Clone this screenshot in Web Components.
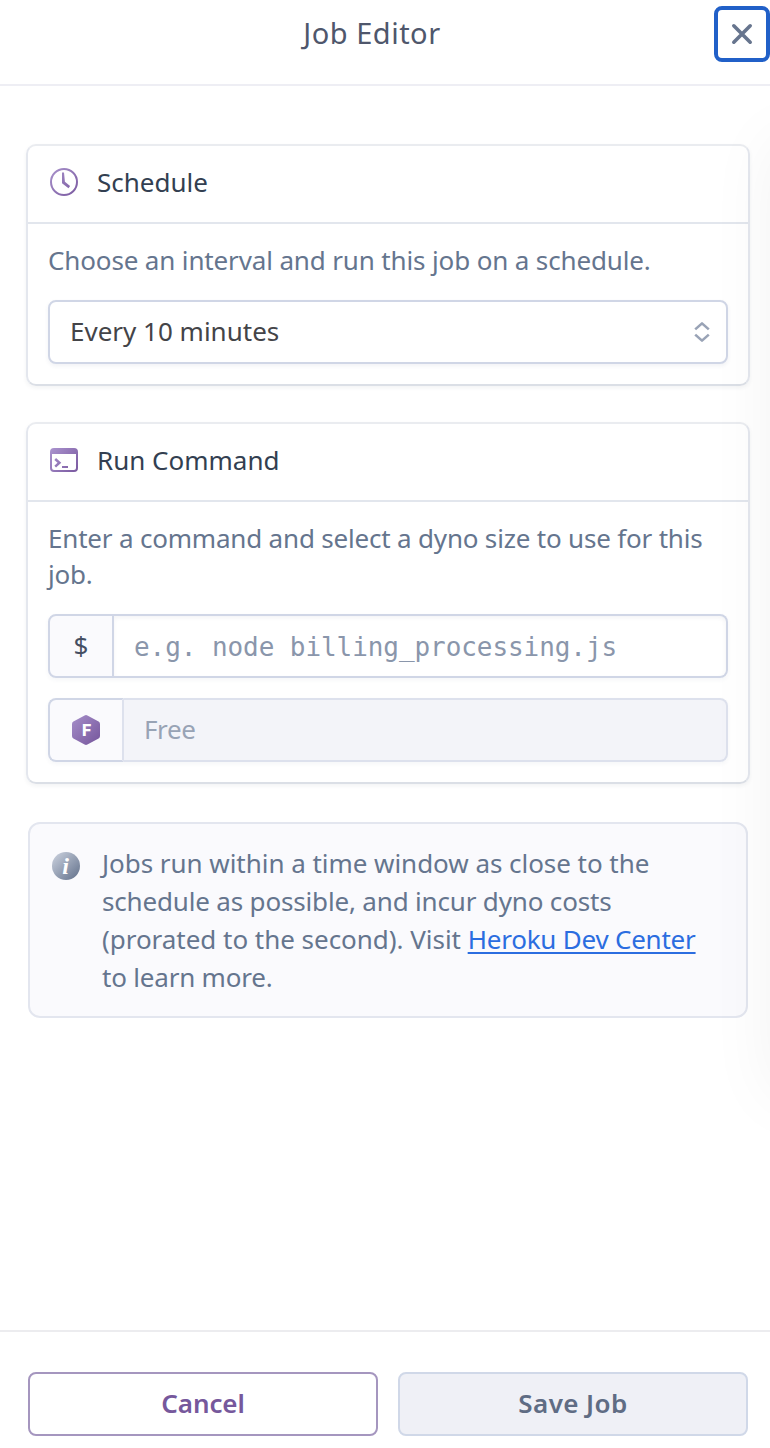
<!DOCTYPE html>
<html lang="en">
<head>
<meta charset="utf-8">
<title>Job Editor</title>
<style>
html, body { margin: 0; height: 100%; }
body { background: #fff; font-family: "Noto Sans", sans-serif; font-size: 26px; color: #65758e; overflow: hidden; }
</style>
</head>
<body>
<job-editor></job-editor>
<script>
function define(name, html) {
  const template = document.createElement('template');
  template.innerHTML = html;
  customElements.define(name, class extends HTMLElement {
    constructor() {
      super();
      this.attachShadow({ mode: 'open' }).append(template.content.cloneNode(true));
    }
  });
}

define('close-button', `
<style>
:host { display: block; }
button { display: grid; place-items: center; box-sizing: border-box; width: 56px; height: 56px; padding: 0; border: 4px solid #2160c8; border-radius: 8px; background: #fff; }
</style>
<button aria-label="Close"><svg width="24" height="24" viewBox="0 0 24 24" fill="none" stroke="#67758e" stroke-width="3.6" stroke-linecap="round"><path d="M3.8 3.8 20.2 20.2M20.2 3.8 3.8 20.2"/></svg></button>`);

define('editor-header', `
<style>
:host { display: flex; box-sizing: border-box; height: 86px; padding: 6px 0 0 30px; border-bottom: 2px solid #eeeef4; background: #fff; }
h1 { flex: 1; margin: 0; font-size: 29px; font-weight: 400; line-height: 54px; text-align: center; color: #4f576c; letter-spacing: .5px; }
</style>
<h1><slot></slot></h1><close-button></close-button>`);

define('panel-card', `
<style>
:host { display: block; box-sizing: border-box; border: 2px solid #e4e7ee; border-top-color: #eaecf0; border-bottom-color: #dbdfe6; border-radius: 10px; box-shadow: 0 2px 4px rgba(40,50,70,.06); }
header { display: flex; align-items: center; gap: 19px; box-sizing: border-box; height: 78px; padding: 0 20px 2px 22px; border-bottom: 2px solid #e2e6ed; }
h2 { margin: 0 0 2px; font-size: 26px; font-weight: 400; line-height: 36px; color: #333f51; }
.body { padding: 18px 20px; }
</style>
<header><slot name="icon"></slot><h2><slot name="title"></slot></h2></header>
<div class="body"><slot></slot></div>`);

define('clock-icon', `
<style>:host { display: block; height: 28px; margin-bottom: 2px; } svg { display: block; }</style>
<svg width="28" height="28" viewBox="0 0 28 28" fill="none" stroke="url(#g)"><defs><linearGradient id="g" gradientUnits="userSpaceOnUse" x1="0" y1="0" x2="28" y2="28"><stop stop-color="#a993cc"/><stop offset="1" stop-color="#79589f"/></linearGradient></defs><circle cx="14" cy="14" r="13" stroke-width="2"/><path d="M12 4.5h2l.9 9.3 5.2 4.2-1.6 2.2-6.5-5z" fill="url(#g)" stroke="none"/></svg>`);

define('terminal-icon', `
<style>:host { display: block; height: 24px; margin-bottom: 2px; } svg { display: block; }</style>
<svg width="28" height="24" viewBox="0 0 28 24"><defs><linearGradient id="g" gradientUnits="userSpaceOnUse" x1="0" y1="0" x2="28" y2="24"><stop stop-color="#ab94cf"/><stop offset="1" stop-color="#79589f"/></linearGradient></defs><path fill="url(#g)" fill-rule="evenodd" d="M4 0h20a4 4 0 0 1 4 4v16a4 4 0 0 1-4 4H4a4 4 0 0 1-4-4V4a4 4 0 0 1 4-4ZM2 6v14q0 2 2 2h20q2 0 2-2V6Z"/><path fill="none" stroke="url(#g)" stroke-width="2.5" d="m5.2 11 4.2 3.8-4.2 3.8"/><path fill="url(#g)" d="M12 18h6v2h-6z"/></svg>`);

define('select-box', `
<style>
:host { display: flex; align-items: center; justify-content: space-between; box-sizing: border-box; height: 64px; padding: 0 16px 2px 20px; border: 2px solid #d0d6e6; border-radius: 8px; background: #fff; color: #444448; box-shadow: 0 2px 4px rgba(60,70,110,.07); }
svg { display: block; margin-top: 2px; }
</style>
<slot></slot>
<svg width="16" height="20" viewBox="0 0 16 20" fill="none" stroke="#99a3b6" stroke-width="2.6" stroke-linejoin="round"><path d="m1.2 7.4 6.8-6 6.8 6M1.2 12.6l6.8 6 6.8-6"/></svg>`);

define('input-row', `
<style>
:host { display: flex; height: 64px; border-radius: 8px; box-shadow: 0 2px 4px rgba(60,70,110,.05); }
.prefix { display: grid; place-items: center; box-sizing: border-box; width: var(--prefix, 66px); background: #fafafd; border: 2px solid #d0d6e6; border-radius: 8px 0 0 8px; color: #444e62; }
.prefix ::slotted(span) { margin-bottom: 2px; }
.value { flex: 1; display: flex; align-items: center; box-sizing: border-box; padding: 0 20px; border: 2px solid #d0d6e6; border-left: 0; border-radius: 0 8px 8px 0; color: #8a96ab; background: #fff; box-shadow: inset 0 2px 4px rgba(60,70,110,.06); }
:host([disabled]) .prefix { border-right-color: #dde1ed; }
:host([disabled]) .value { padding-bottom: 3px; border-color: #dde1ed; background: #f3f4f9; color: #98a3b5; box-shadow: none; letter-spacing: -.4px; }
</style>
<div class="prefix"><slot name="prefix"></slot></div><div class="value"><slot></slot></div>`);

define('dyno-badge', `
<style>:host { display: block; } svg { display: block; } text { font: 800 16px Inter, sans-serif; }</style>
<svg width="28" height="30" viewBox="0 0 28 30"><defs><linearGradient id="g" x1="0" y1="0" x2="1" y2="1"><stop stop-color="#a68fca"/><stop offset="1" stop-color="#75559b"/></linearGradient></defs><path fill="url(#g)" d="M12.6.5q1.4-.8 2.8 0L26.6 6.6Q28 7.4 28 9v12q0 1.6-1.4 2.4L15.4 29.5q-1.4.8-2.8 0L1.4 23.4Q0 22.6 0 21V9q0-1.6 1.4-2.4Z"/><text x="14.7" y="20.8" fill="#fff" text-anchor="middle">F</text></svg>`);

define('info-icon', `
<style>:host { display: block; } svg { display: block; } text { font: italic 700 24px "Liberation Serif", serif; }</style>
<svg width="28" height="28" viewBox="0 0 28 28"><defs><linearGradient id="g" x1=".1" y1=".1" x2=".9" y2=".9"><stop stop-color="#c3cad8"/><stop offset="1" stop-color="#6b7992"/></linearGradient></defs><circle cx="14" cy="14" r="14" fill="url(#g)"/><text x="13.6" y="21.6" fill="#fff" text-anchor="middle">i</text></svg>`);

define('info-note', `
<style>
:host { display: flex; gap: 22px; box-sizing: border-box; height: 196px; padding: 20px 22px; border: 2px solid #e3e6ef; border-radius: 12px; background: #fafafd; }
info-icon { padding-top: 8px; }
p { margin: 0; line-height: 38px; white-space: nowrap; }
</style>
<info-icon></info-icon><p><slot></slot></p>`);

define('action-button', `
<style>
:host { display: block; flex: 1; }
button { display: block; width: 100%; height: 64px; box-sizing: border-box; padding: 0 0 3px; border: 2px solid #a596bf; border-radius: 8px; background: #fff; color: #76589c; font: 600 26px "Noto Sans", sans-serif; letter-spacing: -.1px; }
:host([muted]) button { border-color: #d0d8e8; background: #eff0f6; color: #5f6c84; letter-spacing: .4px; }
</style>
<button><slot></slot></button>`);

define('edge-shade', `
<style>
:host { position: absolute; inset: 86px 0 0; overflow: hidden; pointer-events: none; }
div { position: absolute; left: 100%; top: 54px; width: 300px; height: 956px; box-shadow: 0 0 64px rgba(0,0,0,.052); }
</style><div></div>`);

define('job-editor', `
<style>
:host { position: relative; display: flex; flex-direction: column; width: 770px; height: 1448px; overflow: hidden; }
main { flex: 1; display: flex; flex-direction: column; padding: 58px 20px 0 26px; }
#schedule { height: 242px; }
#command { height: 362px; margin-top: 36px; }
p { margin: 0 0 22px; line-height: 36px; letter-spacing: -.14px; white-space: nowrap; }
.t2 { letter-spacing: -.19px; }
input-row + input-row { margin-top: 20px; }
.mono { font: 26px "DejaVu Sans Mono", monospace; letter-spacing: -.07px; margin-top: 2px; }
info-note { margin: 38px 2px 0; }
.l1 { letter-spacing: -.04px; }
.l2 { letter-spacing: -.17px; }
.l3 { letter-spacing: -.03px; }
.l4 { letter-spacing: -.2px; }
a { color: #2b6de0; letter-spacing: -.22px; text-decoration: underline; text-decoration-thickness: 2px; text-underline-offset: 3px; }
footer { display: flex; gap: 20px; box-sizing: border-box; height: 118px; padding: 40px 22px 12px 28px; border-top: 2px solid #ececef; }
</style>
<editor-header>Job Editor</editor-header>
<main>
<panel-card id="schedule"><clock-icon slot="icon"></clock-icon><span slot="title">Schedule</span>
<p class="t1">Choose an interval and run this job on a schedule.</p>
<select-box>Every 10 minutes</select-box></panel-card>
<panel-card id="command"><terminal-icon slot="icon"></terminal-icon><span slot="title">Run Command</span>
<p class="t2">Enter a command and select a dyno size to use for this<br>job.</p>
<input-row><span slot="prefix">$</span><span class="mono">e.g. node billing_processing.js</span></input-row>
<input-row disabled style="--prefix: 76px"><dyno-badge slot="prefix"></dyno-badge>Free</input-row></panel-card>
<info-note><span class="l1">Jobs run within a time window as close to the</span><br><span class="l2">schedule as possible, and incur dyno costs</span><br><span class="l3">(prorated to the second). Visit </span><a>Heroku Dev Center</a><br><span class="l4">to learn more.</span></info-note>
</main>
<footer><action-button>Cancel</action-button><action-button muted>Save Job</action-button></footer>
<edge-shade></edge-shade>`);
</script>
</body>
</html>
